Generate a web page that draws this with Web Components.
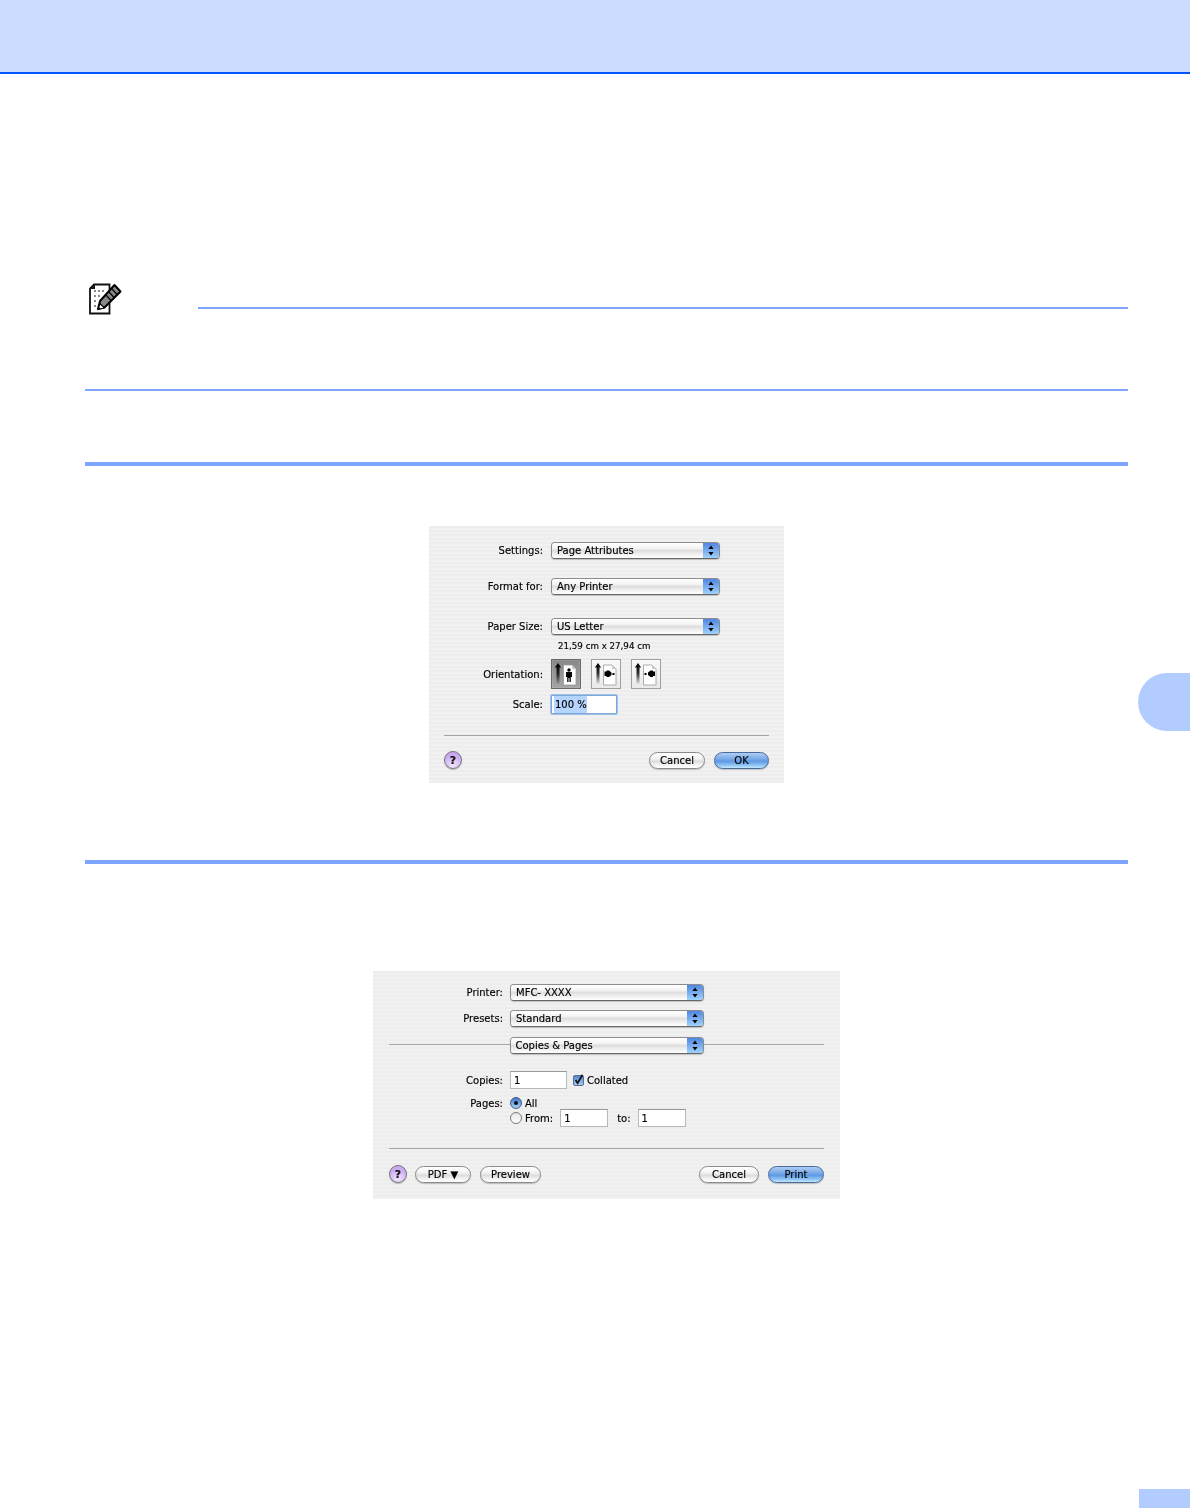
<!DOCTYPE html>
<html>
<head>
<meta charset="utf-8">
<title>Page Setup</title>
<style>
    html, body { margin: 0; padding: 0; background: #fff; }
    body { font-family: "DejaVu Sans", sans-serif; }
</style>
</head>
<body>
<x-page>
    <x-note></x-note>
    <x-rule style="margin-top:71px"></x-rule>

    <x-band style="margin-top:60px">
        <x-dialog style="width:355px;padding:16px 0 14px;--label-w:114px;--label-gap:8px">
            <x-row label="Settings:"><x-popup style="width:169px">Page Attributes</x-popup></x-row>
            <x-row label="Format for:" style="margin-top:19px"><x-popup style="width:169px">Any Printer</x-popup></x-row>
            <x-row label="Paper Size:" style="margin-top:23px"><x-popup style="width:169px">US Letter</x-popup></x-row>
            <x-row style="margin-top:5px;height:12px"><x-small>21,59 cm x 27,94 cm</x-small></x-row>
            <x-row label="Orientation:" style="margin-top:7px;height:30px">
                <x-orient-group>
                    <x-orient kind="portrait" selected></x-orient>
                    <x-orient kind="left"></x-orient>
                    <x-orient kind="right"></x-orient>
                </x-orient-group>
            </x-row>
            <x-row label="Scale:" style="margin-top:6px;height:19px"><x-field focused style="width:66px;height:19px">100 %</x-field></x-row>
            <x-divider style="margin:21px 15px 0"></x-divider>
            <x-actions style="margin:16px 15px 0">
                <x-help></x-help>
                <x-spacer></x-spacer>
                <x-btn style="width:56px">Cancel</x-btn>
                <x-btn primary style="width:55px;margin-left:9px">OK</x-btn>
            </x-actions>
        </x-dialog>
        <x-tab></x-tab>
    </x-band>

    <x-rule style="margin-top:77px"></x-rule>

    <x-band style="margin-top:107px;padding-left:373px">
        <x-dialog style="width:467px;padding:13px 0 16px;--label-w:130px;--label-gap:7px">
            <x-row label="Printer:"><x-popup style="width:194px">MFC- XXXX</x-popup></x-row>
            <x-row label="Presets:" style="margin-top:9px"><x-popup style="width:194px">Standard</x-popup></x-row>
            <x-lined style="margin-top:10px"><x-popup style="width:194px">Copies &amp; Pages</x-popup></x-lined>
            <x-row label="Copies:" style="margin-top:17px;height:18px">
                <x-field style="width:57px">1</x-field>
                <x-check style="margin-left:6px" checked>Collated</x-check>
            </x-row>
            <x-row label="Pages:" style="margin-top:8px;height:12px"><x-radio checked>All</x-radio></x-row>
            <x-row style="height:18px">
                <x-radio>From:</x-radio>
                <x-field style="width:48px;margin-left:7px">1</x-field>
                <x-text style="margin-left:9px">to:</x-text>
                <x-field style="width:48px;margin-left:7px">1</x-field>
            </x-row>
            <x-divider style="margin:21px 16px 0"></x-divider>
            <x-actions style="margin:17px 16px 0">
                <x-help></x-help>
                <x-btn style="width:56px;margin-left:8px">PDF ▼</x-btn>
                <x-btn style="width:61px;margin-left:9px">Preview</x-btn>
                <x-spacer></x-spacer>
                <x-btn style="width:60px">Cancel</x-btn>
                <x-btn primary style="width:56px;margin-left:9px">Print</x-btn>
            </x-actions>
        </x-dialog>
    </x-band>
</x-page>

<script>
    // little helper, every element here is just a style block and some markup
    function simple(tag, html, observedInit){
        customElements.define(tag, class extends HTMLElement {
            constructor(){
                super();
                this.attachShadow({mode: 'open'});
                this.shadowRoot.innerHTML = html;
                if(observedInit) this._init = observedInit;
            }
            connectedCallback(){
                if(this._init) this._init.call(this);
            }
        });
    }

    simple('x-page', `
        <style>
            :host { display: flex; flex-direction: column; min-height: 1508px; box-sizing: border-box; overflow: hidden; }
            header { height: 72px; background: #ccdcff; border-bottom: 2px solid #0055ff; flex: none; }
            main { flex: 1; display: block; }
            footer { flex: none; display: flex; justify-content: flex-end; }
            footer div { width: 51px; height: 19px; background: #b3ccff; }
        </style>
        <header></header>
        <main><slot></slot></main>
        <footer><div></div></footer>
    `);

    simple('x-note', `
        <style>
            :host { display: flex; margin: 209px 62px 0 85px; height: 108px; box-sizing: border-box; border-bottom: 2px solid #7da5ff; }
            svg { flex: none; margin-left: 4px; width: 33px; height: 33px; }
            div { flex: 1; height: 2px; margin: 24px 0 0 76px; background: #7da5ff; }
        </style>
        <svg viewBox="0 0 33 33">
            <path d="M5 1.5h15.5v29H1V5.5z" fill="#fff" stroke="#111" stroke-width="1.8"/>
            <path d="M1.5 6L6 1.5V6z" fill="#111"/>
            <g fill="#888"><rect x="5" y="7" width="2" height="2"/><rect x="9" y="7" width="2" height="2"/><rect x="13" y="7" width="2" height="2"/><rect x="5" y="12" width="2" height="2"/><rect x="9" y="12" width="2" height="2"/><rect x="5" y="17" width="2" height="2"/><rect x="5" y="22" width="2" height="2"/></g>
            <path d="M25.5 2L31.5 8.5 16 24 9 26 11 18z" fill="#888" stroke="#000" stroke-width="2" stroke-linejoin="round"/>
            <path d="M23 6l5.5 6M20 9l5.5 6M17 12l5.5 6" stroke="#000" stroke-width="1.2"/>
            <path d="M9 26.5l2-6 4.5 4.5z" fill="#fff" stroke="#000" stroke-width="1.2"/>
            <path d="M9 26.5l.9-2.6 1.8 1.8z" fill="#000"/>
        </svg>
        <div></div>
    `);

    simple('x-rule', `
        <style>
            :host { display: block; height: 4px; margin: 0 62px 0 85px; background: #7da5ff; }
        </style>
    `);

    simple('x-band', `
        <style>
            :host { display: flex; align-items: flex-start; padding-left: 429px; }
            ::slotted(x-tab) { margin-left: auto; margin-top: 147px; }
        </style>
        <slot></slot>
    `);

    simple('x-tab', `
        <style>
            :host { display: block; width: 52px; height: 58px; background: #b3ccff; border-radius: 29px 0 0 29px; }
        </style>
    `);

    simple('x-dialog', `
        <style>
            :host {
                display: block; box-sizing: border-box; flex: none;
                background: repeating-linear-gradient(#ededed 0 2px, #f1f1f1 2px 4px);
                font: 10px "DejaVu Sans", sans-serif; color: #000;
                -webkit-text-stroke: .15px #000;
                filter: blur(.25px);
            }
        </style>
        <slot></slot>
    `);

    // one form line: right aligned label and then the control(s)
    simple('x-row', `
        <style>
            :host { display: grid; grid-template-columns: var(--label-w) 1fr; column-gap: var(--label-gap); height: 17px; align-items: center; }
            label { text-align: right; white-space: nowrap; }
            div { display: flex; align-items: center; min-width: 0; }
        </style>
        <label></label><div><slot></slot></div>
    `, function(){
        this.shadowRoot.querySelector('label').textContent = this.getAttribute('label') || '';
    });

    simple('x-popup', `
        <style>
            :host {
                display: flex; box-sizing: border-box; height: 17px; flex: none;
                border: 1px solid #8c8c8c; border-bottom-color: #666; border-radius: 4px; overflow: hidden;
                box-shadow: 0 1px 1px rgba(0,0,0,.2);
            }
            span {
                flex: 1; padding-left: 5px; line-height: 16px; white-space: nowrap;
                background: linear-gradient(#fff 0, #f4f4f4 35%, #dedede 50%, #f0f0f0 75%, #fff 100%);
            }
            i {
                flex: none; width: 16px; display: flex; align-items: center; justify-content: center;
                background: linear-gradient(#4f86e0 0, #74a8ee 45%, #9fd2fb 100%);
            }
        </style>
        <span><slot></slot></span>
        <i><svg width="6" height="11" viewBox="0 0 6 11"><path d="M3 .5L5.6 4H.4zM3 10.5L.4 7h5.2z" fill="#000"/></svg></i>
    `);

    simple('x-small', `
        <style>
            :host { display: block; font-size: 8.7px; padding-left: 7px; white-space: nowrap; }
        </style>
        <slot></slot>
    `);

    simple('x-text', `<style>:host { display: inline-block; white-space: nowrap; }</style><slot></slot>`);

    simple('x-orient-group', `
        <style>
            :host { display: flex; gap: 10px; }
        </style>
        <slot></slot>
    `);

    const orientArt = {
        portrait: '<circle cx="17" cy="10" r="1.7" fill="#000"/><path d="M14 12h6v5h-1.2v5h-1.3v-4h-1v4h-1.3v-5H14z" fill="#000"/>',
        left: '<path d="M12.5 11.5h2v-1h2.5l2.5 2v2.5l-2.5 2h-2.5v-1h-2z" fill="#000"/><rect x="20.5" y="13" width="2" height="2" fill="#000"/>',
        right: '<path d="M23 11.5h-2v-1h-2.5l-2.500 2v2.500l2.500 2h2.500v-1h2z" fill="#000"/><rect x="12.500" y="13" width="2" height="2" fill="#000"/>'
    };

    simple('x-orient', `
        <style>
            :host {
                display: block; width: 30px; height: 30px; box-sizing: border-box; border: 1px solid #a0a0a0;
                background: linear-gradient(#fafafa, #e8e8e8);
                box-shadow: inset 0 0 1px #fff;
            }
            :host([selected]) { background: linear-gradient(#888, #a4a4a4); border-color: #6a6a6a; }
            svg { display: block; width: 28px; height: 28px; }
        </style>
        <svg viewBox="0 0 28 28">
            <defs><linearGradient id="fade" x1="0" y1="0" x2="0" y2="1"><stop offset="0" stop-color="#000"/><stop offset=".5" stop-color="#000" stop-opacity=".8"/><stop offset="1" stop-color="#000" stop-opacity=".05"/></linearGradient></defs>
            <path d="M6 3l3.200 4.600H7.500V24H4.500V7.600H2.800z" fill="url(#fade)"/>
            <path d="M11.500 5h8.500l4 4v16H11.500z" fill="#fff" stroke="#999" stroke-width=".8"/>
            <path d="M20 5v4h4z" fill="#ccc"/>
            <g class="art"></g>
        </svg>
    `, function(){
        this.shadowRoot.querySelector('.art').innerHTML = orientArt[this.getAttribute('kind')];
    });

    simple('x-field', `
        <style>
            :host {
                display: block; box-sizing: border-box; height: 18px; flex: none; background: #fff;
                border: 1px solid #b8b8b8; border-top-color: #989898; padding-left: 3px; line-height: 17px; white-space: nowrap;
            }
            :host([focused]) {
                border: 1px solid #7fa8d8; box-shadow: 0 0 0 1px #9ec1e8; border-radius: 1px; padding-left: 2px;
            }
            :host([focused]) span { background: #b5d5ff; padding-left: 1px; display: inline-block; line-height: 17px; }
        </style>
        <span><slot></slot></span>
    `);

    simple('x-check', `
        <style>
            :host { display: flex; align-items: center; gap: 3px; white-space: nowrap; }
            svg { width: 11px; height: 12px; flex: none; }
        </style>
        <svg viewBox="0 0 11 12">
            <defs><linearGradient id="b" x1="0" y1="0" x2="0" y2="1"><stop offset="0" stop-color="#4f83d4"/><stop offset="1" stop-color="#a5cff6"/></linearGradient></defs>
            <rect x=".5" y="1.5" width="10" height="10" rx="1.5" fill="url(#b)" stroke="#5a6f8c"/>
            <path d="M2.600 6l2 3.200L9.500 .8" fill="none" stroke="#111" stroke-width="1.700"/>
        </svg>
        <slot></slot>
    `);

    simple('x-radio', `
        <style>
            :host { display: flex; align-items: center; gap: 4px; white-space: nowrap; }
            b { width: 12px; height: 12px; box-sizing: border-box; border-radius: 50%; flex: none; display: flex; align-items: center; justify-content: center; border: 1px solid #7c7c7c; background: linear-gradient(#e6e6e6, #fff); margin-right: -1px; }
            :host([checked]) b { border-color: #3d5a86; background: linear-gradient(#3f78cf, #a9d4f8); }
            :host([checked]) b::after { content: ""; width: 4px; height: 4px; background: #111; border-radius: 50%; }
        </style>
        <b></b><slot></slot>
    `);

    simple('x-lined', `
        <style>
            :host { display: flex; align-items: center; margin: 0 16px; height: 17px; }
            hr { flex: 1; margin: -2px 0 0; border: 0; height: 1px; background: #a8a8a8; }
        </style>
        <hr><slot></slot><hr>
    `);

    simple('x-divider', `
        <style>:host { display: block; height: 1px; background: #a4a4a4; }</style>
    `);

    simple('x-actions', `
        <style>:host { display: flex; align-items: center; height: 17px; }</style>
        <slot></slot>
    `);

    simple('x-spacer', `<style>:host { display: block; flex: 1; }</style>`);

    simple('x-help', `
        <style>
            :host {
                display: flex; align-items: center; justify-content: center; flex: none; box-sizing: border-box;
                width: 18px; height: 18px; margin-top: -1px; border-radius: 50%; border: 1px solid #777;
                background: radial-gradient(circle at 50% 85%, #f2e6ff, #c9a8f0 70%);
                font-weight: bold; font-size: 11px; color: #111; box-shadow: 0 1px 1px rgba(0,0,0,.25);
            }
        </style>
        ?
    `);

    simple('x-btn', `
        <style>
            :host {
                display: flex; align-items: center; justify-content: center; box-sizing: border-box; flex: none;
                height: 17px; border-radius: 9px; border: 1px solid #8a8a8a; white-space: nowrap;
                background: linear-gradient(#fff 0, #f2f2f2 40%, #dcdcdc 55%, #f4f4f4 80%, #fff 100%);
                box-shadow: 0 1px 1px rgba(0,0,0,.2);
            }
            :host([primary]) {
                border-color: #4a6a9c;
                background: linear-gradient(#aecdf3 0, #78a9e6 40%, #5e98e4 55%, #96caf6 85%, #c6e9fd 100%);
            }
        </style>
        <slot></slot>
    `);
</script>
</body>
</html>
